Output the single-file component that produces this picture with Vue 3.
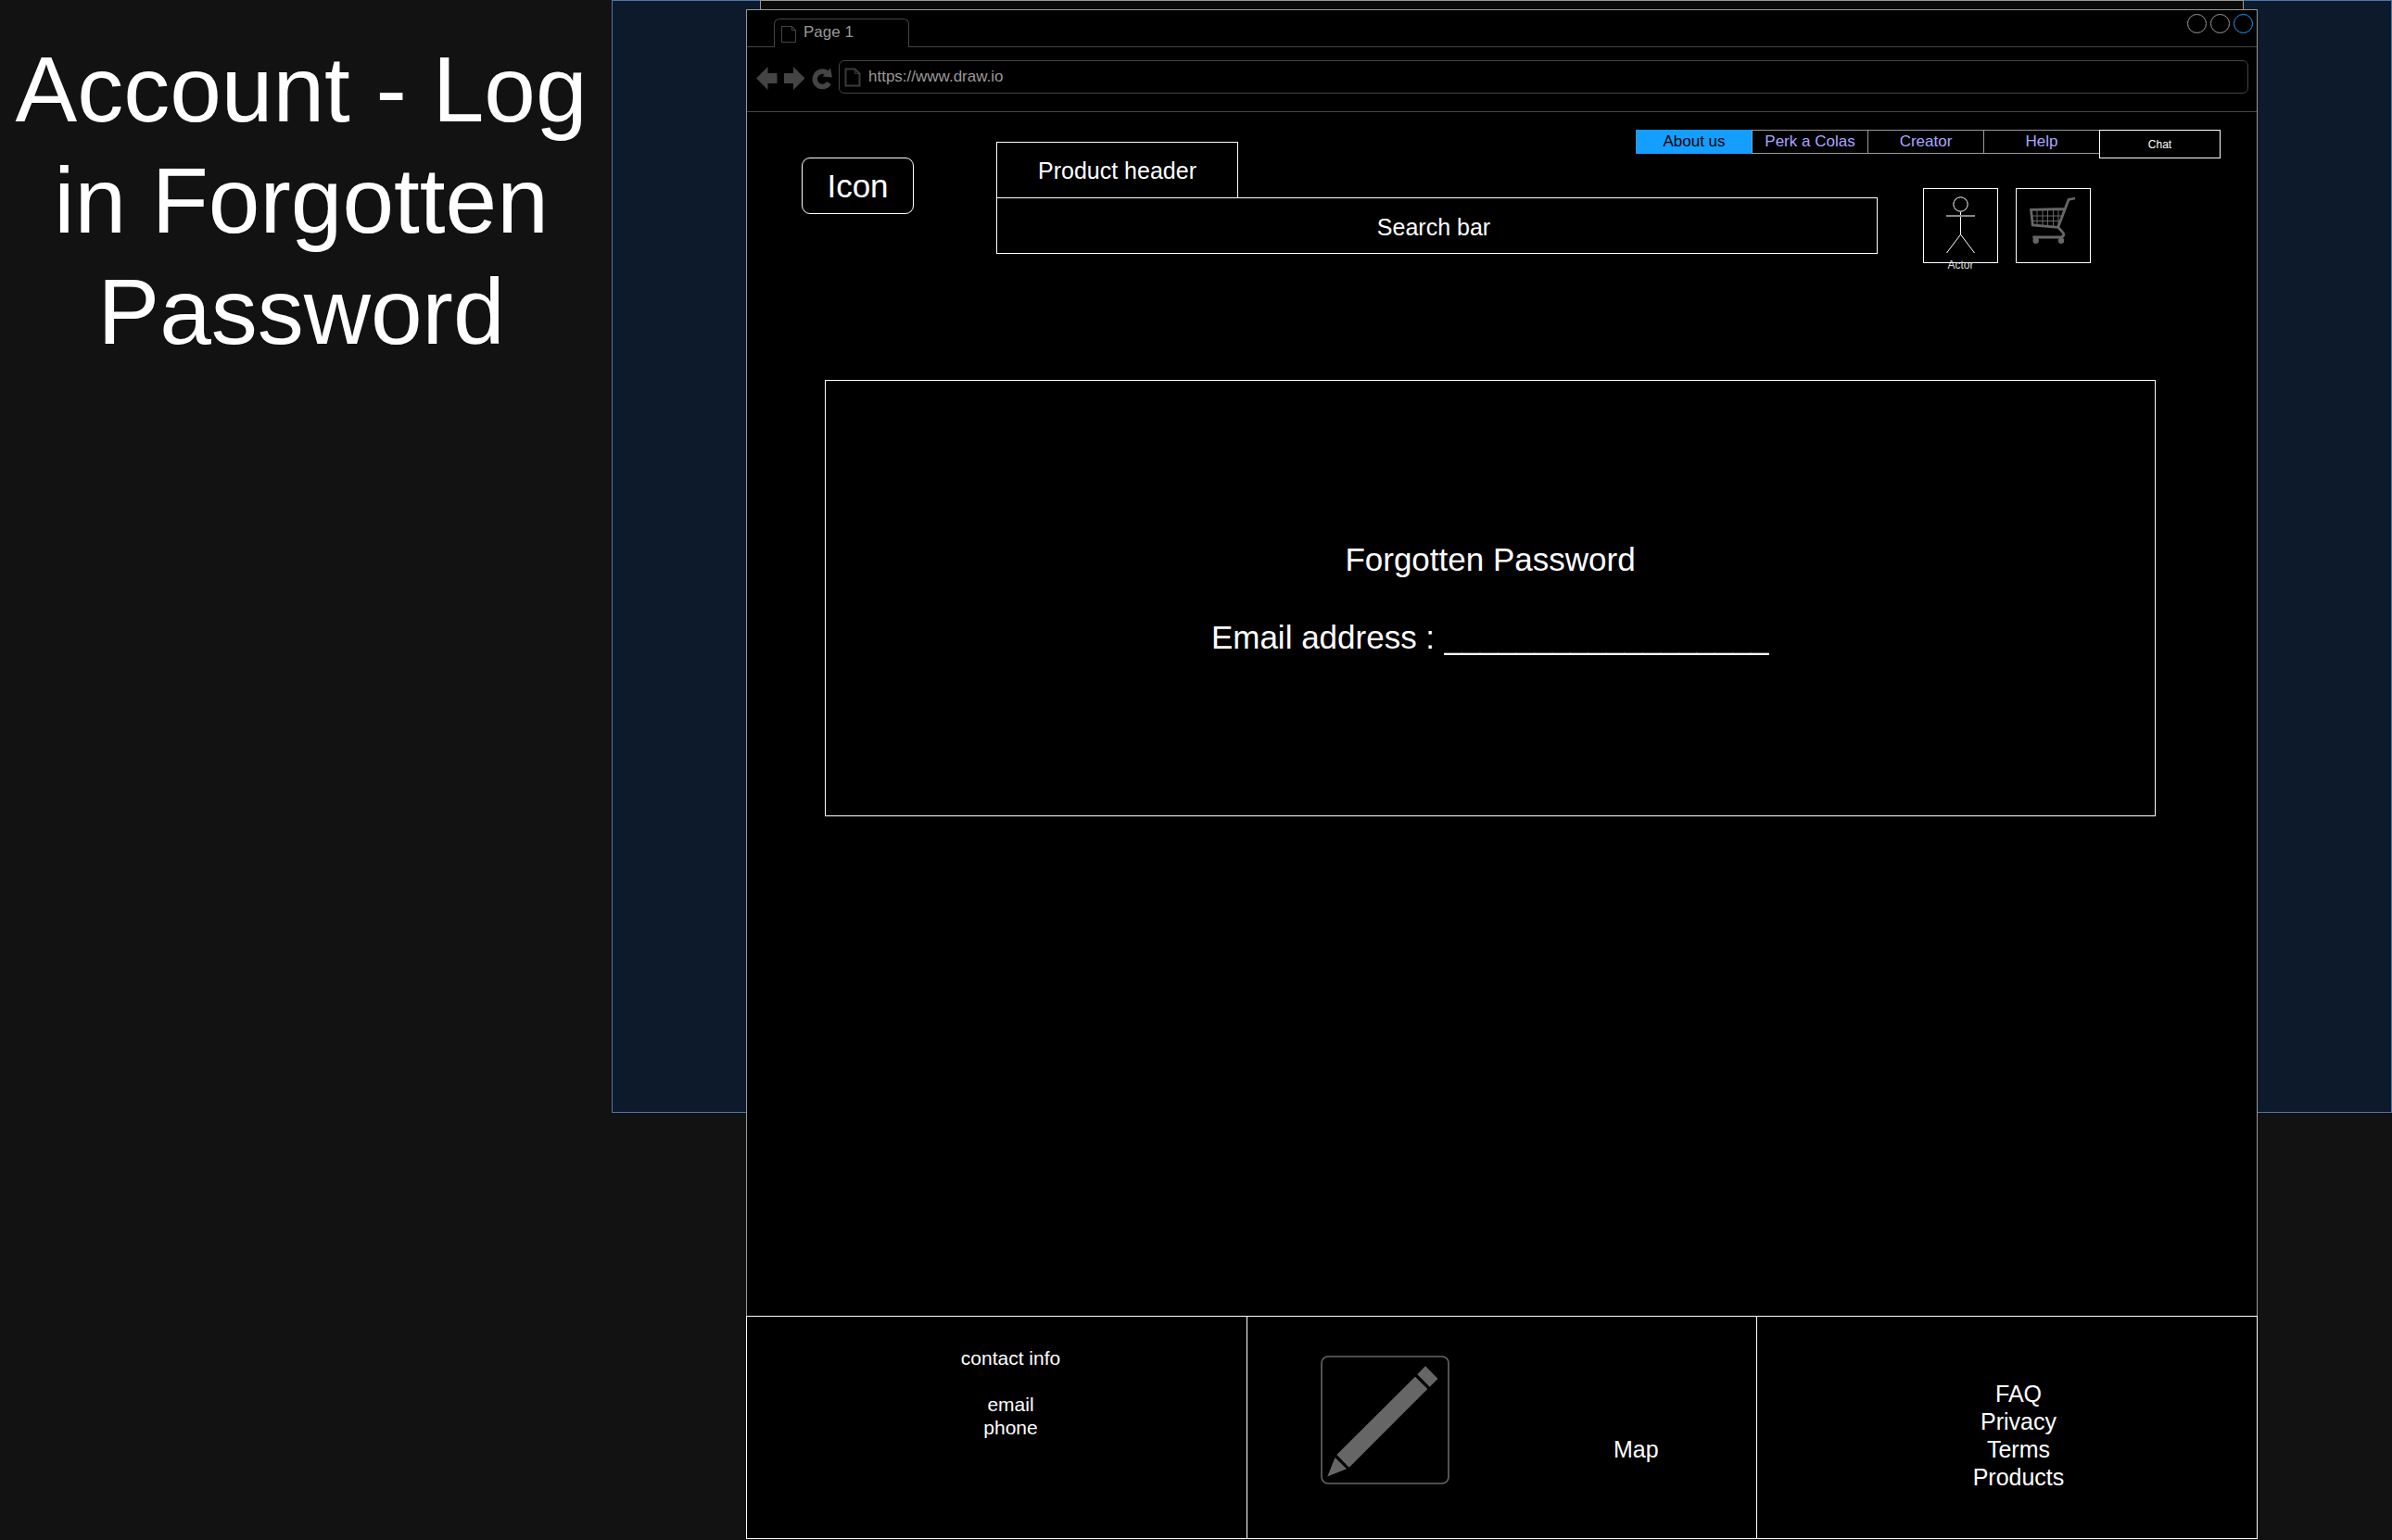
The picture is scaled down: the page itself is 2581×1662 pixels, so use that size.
<script setup>
import { ref } from 'vue'

const address = ref('https://www.draw.io')
const links = ['About us', 'Perk a Colas', 'Creator', 'Help']
const active = ref('About us')
const info = ['FAQ', 'Privacy', 'Terms', 'Products']
</script>

<template>
  <div class="page">
    <h1 class="title">Account - Log in Forgotten Password</h1>

    <div class="stage">
      <div class="panel"></div>
      <div class="strip"></div>

      <div class="window">
        <div class="tab-row">
          <div class="tab">
            <svg width="18" height="20" viewBox="0 0 18 20" fill="none" stroke="#444">
              <path d="M1.500 1.500H12.500L16.500 5.500V18.500H1.500ZM12.500 1.500V5.500H16.500" />
            </svg>
            <span>Page 1</span>
          </div>
          <div class="controls">
            <button type="button" aria-label="Minimize"></button>
            <button type="button" aria-label="Maximize"></button>
            <button type="button" class="close" aria-label="Close"></button>
          </div>
        </div>

        <div class="address-row">
          <button type="button" class="tool" aria-label="Back">
            <svg width="23" height="25" viewBox="0 0 23 25" fill="#444">
              <path d="M0 12.500L12.500 0V7H22.500V18H12.500V25Z" />
            </svg>
          </button>
          <button type="button" class="tool" aria-label="Forward">
            <svg width="23" height="25" viewBox="0 0 23 25" fill="#444">
              <path d="M22.500 12.500L10 0V7H0V18H10V25Z" />
            </svg>
          </button>
          <button type="button" class="tool" aria-label="Reload">
            <svg width="22" height="25" viewBox="0 0 22 25">
              <path d="M18.500 17.500A8.200 8.200 0 1 1 16 6.500" fill="none" stroke="#444" stroke-width="5.500" />
              <path d="M20 1.500L22 11.500L11.500 10.500Z" fill="#444" />
            </svg>
          </button>
          <label class="address">
            <svg width="18" height="21" viewBox="0 0 18 21" fill="none" stroke="#3a3a3a" stroke-width="2">
              <path d="M1.500 1.500H11.500L16.500 6.500V19.500H1.500Z" />
              <path d="M11.500 1.500V6.500H16.500" stroke-width="1" />
            </svg>
            <input v-model="address" type="text" aria-label="Address" />
          </label>
        </div>

        <header class="header">
          <button type="button" class="brand">Icon</button>
          <div class="header-main">
            <div class="top-row">
              <div class="product">Product header</div>
              <nav class="nav">
                <a
                  v-for="link in links"
                  :key="link"
                  href="#"
                  :class="{ active: link === active }"
                  @click.prevent="active = link"
                >{{ link }}</a>
                <button type="button" class="chat">Chat</button>
              </nav>
            </div>
            <div class="search-row">
              <input class="search" type="text" placeholder="Search bar" aria-label="Search bar" />
              <button type="button" class="tile">
                <svg width="79" height="79" viewBox="1 1 79 79" fill="none" stroke="#fff">
                  <circle cx="40.500" cy="17.500" r="7.700" />
                  <path d="M40.500 25.500V50L25.500 70M40.500 50L55.500 70" />
                  <path d="M25 30H56" stroke="#888" stroke-width="2" />
                </svg>
                <span class="caption">Actor</span>
              </button>
              <button type="button" class="tile" aria-label="Cart">
                <svg width="79" height="79" viewBox="1 1 79 79" fill="none" stroke="#666">
                  <path
                    d="M64 11L57 12.500L45.700 42.300L18.300 40L16.500 23.300L53 22.500M45.700 42.300L51 48Q53 51 49.500 53H18.300"
                    stroke-width="2.800"
                  />
                  <path d="M17 30H50M18 35.500H48M23 23V40M29 23V41M34.500 23V41M40.500 23V42M46 23V41" />
                  <circle cx="21.700" cy="56.700" r="3.200" fill="#666" stroke="none" />
                  <circle cx="49" cy="56.700" r="3.200" fill="#666" stroke="none" />
                </svg>
              </button>
            </div>
          </div>
        </header>

        <form class="card" @submit.prevent>
          <h2>Forgotten Password</h2>
          <div class="field">
            <label for="email">Email address :</label>
            <input id="email" type="email" placeholder="__________________" />
          </div>
        </form>

        <footer class="footer">
          <section class="contact">
            <p>contact info</p>
            <p>email<br />phone</p>
          </section>
          <section class="map">
            <svg width="139" height="139" viewBox="0 0 139 139" fill="#666">
              <rect x="1" y="1" width="137" height="137" rx="7" fill="none" stroke="#666" stroke-width="1.600" />
              <path d="M7.300 130.500L15.500 110L28 122.300Z" />
              <path d="M17.300 107L102 22.700L115.300 36L30.700 120.700Z" />
              <path d="M104.300 20.300L113 11.300L126.500 25L117.700 33.700Z" />
            </svg>
            <span>Map</span>
          </section>
          <section class="info">
            <a v-for="item in info" :key="item" href="#">{{ item }}</a>
          </section>
        </footer>
      </div>
    </div>
  </div>
</template>

<style>
body {
  background: #121212;
}
</style>

<style scoped>
.page,
.page * {
  box-sizing: border-box;
}
.page {
  display: grid;
  grid-template-columns: 660px 1fr;
  min-height: 100vh;
  color: #fff;
  background: #121212;
  font: 25px/30px "Liberation Sans", Arial, sans-serif;
}
button,
input {
  margin: 0;
  padding: 0;
  border: 0;
  border-radius: 0;
  outline: 0;
  background: none;
  color: inherit;
  font: inherit;
}
a {
  color: inherit;
  text-decoration: none;
}
svg {
  display: block;
  flex: none;
}
.title {
  margin: 36px 10px 0 0;
  font-size: 100px;
  font-weight: 400;
  line-height: 120px;
  text-align: center;
}
.stage {
  position: relative;
  padding: 10px 145px 0;
}
.panel {
  position: absolute;
  inset: 0 0 auto;
  height: 1201px;
  border: 1px solid #4d75ad;
  background: #0c1a2b;
}
.strip {
  position: absolute;
  inset: 0 160px auto;
  height: 20px;
  border: 1px solid #999;
  background: #0a0a0a;
}
.window {
  position: relative;
  border: 1px solid #999;
  border-bottom: 0;
  background: #000;
}
.tab-row {
  display: flex;
  justify-content: space-between;
  height: 40px;
  padding: 0 4px 0 29px;
  border-bottom: 1px solid #444;
}
.tab {
  display: flex;
  gap: 7px;
  width: 146px;
  height: 31px;
  margin-top: 9px;
  padding: 6px;
  border: 1px solid #444;
  border-bottom: 0;
  border-radius: 6px 6px 0 0;
  background: #000;
  color: #999;
  font-size: 17px;
  line-height: 16px;
}
.controls {
  display: flex;
  gap: 4px;
  padding-top: 4px;
}
.controls button {
  width: 21px;
  height: 21px;
  border: 1px solid #999;
  border-radius: 50%;
}
.controls .close {
  border-color: #149eff;
}
.address-row {
  display: flex;
  align-items: center;
  gap: 7px;
  height: 70px;
  padding: 0 9px 5px 10px;
  border-bottom: 1px solid #444;
}
.tool {
  padding-top: 2px;
}
.address {
  display: flex;
  flex: 1;
  align-items: center;
  gap: 8px;
  height: 36px;
  padding: 0 5px;
  border: 1px solid #444;
  border-radius: 6px;
}
.address input {
  flex: 1;
  height: 20px;
  color: #999;
  font-size: 17px;
  line-height: 20px;
}
.header {
  display: flex;
  align-items: flex-start;
}
.brand {
  flex: none;
  width: 121px;
  height: 61px;
  margin: 49px 89px 0 59px;
  border: 1px solid #fff;
  border-radius: 9px;
  font-size: 35px;
}
.header-main {
  flex: 1;
}
.top-row {
  display: flex;
  justify-content: space-between;
  height: 92px;
  padding-right: 39px;
}
.product {
  width: 261px;
  height: 61px;
  margin-top: 32px;
  border: 1px solid #fff;
  line-height: 61px;
  text-align: center;
}
.nav {
  display: flex;
  align-items: flex-start;
  padding-top: 19px;
  font-size: 17px;
}
.nav a {
  width: 126px;
  height: 26px;
  margin-right: -1px;
  border: 1px solid #999;
  color: #aaa6ff;
  line-height: 24px;
  text-align: center;
}
.nav .active {
  border-color: #149eff;
  background: #149eff;
  color: #000;
}
.nav .chat {
  position: relative;
  width: 131px;
  height: 31px;
  border: 1px solid #fff;
  background: #000;
  font-size: 12px;
}
.search-row {
  display: flex;
  align-items: center;
  gap: 19px;
  height: 61px;
  padding-right: 179px;
}
.search {
  flex: 1;
  height: 61px;
  margin-right: 30px;
  padding: 3px 7px 0 0;
  border: 1px solid #fff;
  text-align: center;
}
input::placeholder {
  color: #fff;
  opacity: 1;
}
.tile {
  position: relative;
  flex: none;
  width: 81px;
  height: 81px;
  border: 1px solid #fff;
}
.caption {
  position: absolute;
  inset: 75px 0 auto;
  color: #ddd;
  font-size: 12px;
  line-height: 14px;
  text-align: center;
}
.card {
  display: flex;
  flex-direction: column;
  align-items: center;
  justify-content: center;
  gap: 42px;
  height: 471px;
  margin: 136px 109px 539px 84px;
  border: 1px solid #fff;
  font-size: 35px;
  line-height: 42px;
}
.card h2 {
  margin: 0;
  font: inherit;
}
.field {
  display: flex;
  gap: 10px;
}
.field input {
  width: 351px;
  height: 42px;
}
.footer {
  display: grid;
  grid-template-columns: 540fr 550fr 540fr;
  height: 241px;
  margin: 0 -1px;
  border: solid #fff;
  border-width: 1px 1px 1px 0;
}
.footer section {
  border-left: 1px solid #fff;
}
.contact {
  padding: 32px 0 0 30px;
  font-size: 21px;
  line-height: 25px;
  text-align: center;
}
.contact p {
  margin: 0 0 25px;
}
.map {
  display: flex;
  align-items: flex-start;
  gap: 177px;
  padding: 42px 0 0 79px;
}
.map span {
  margin-top: 86px;
}
.info {
  display: flex;
  flex-direction: column;
  align-items: center;
  padding: 68px 0 0 25px;
}
</style>
